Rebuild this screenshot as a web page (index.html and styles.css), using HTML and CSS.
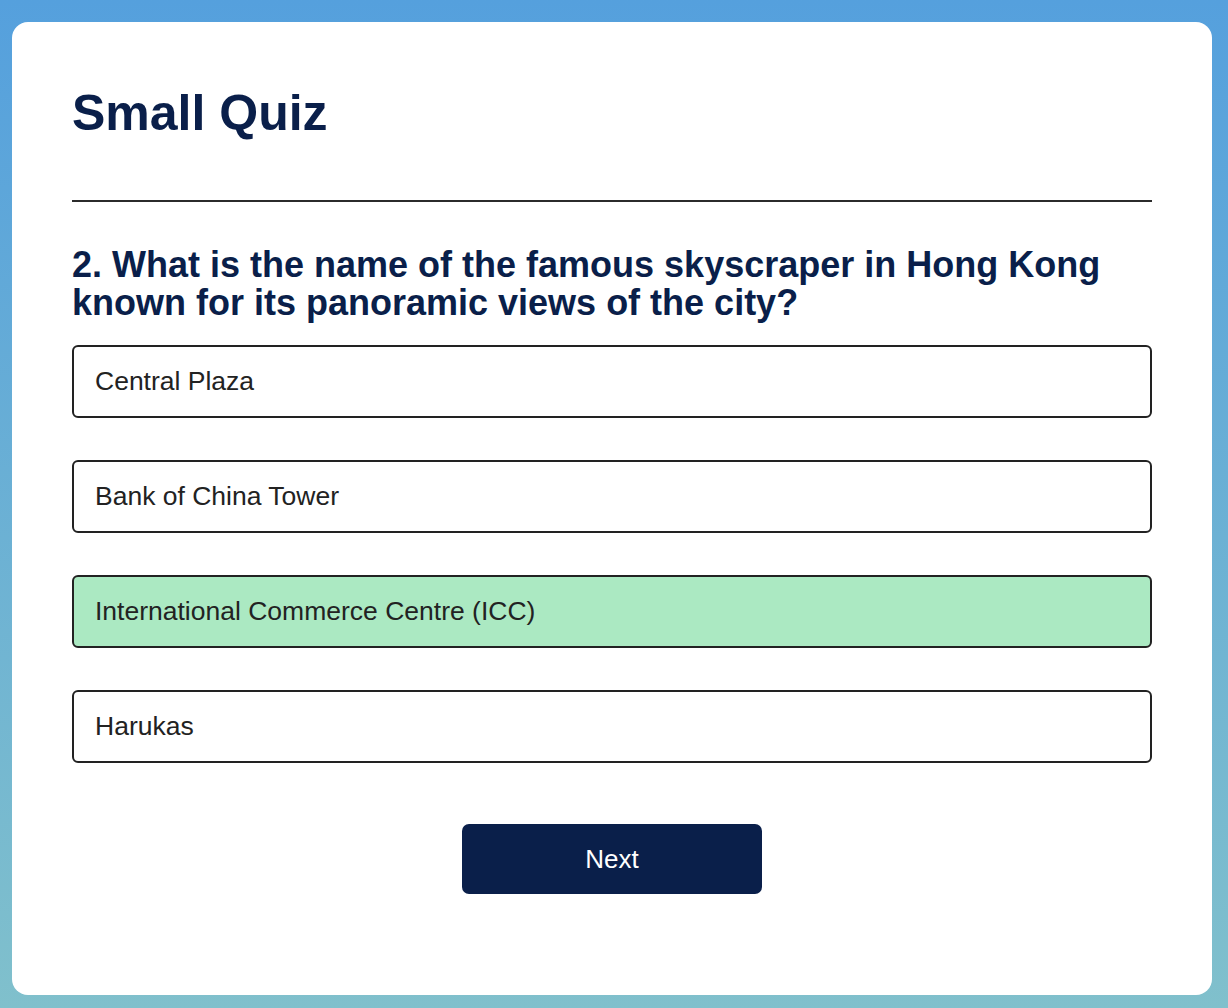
FILE: index.html
```html
<!DOCTYPE html>
<html lang="en">
<head>
<meta charset="utf-8">
<title>Small Quiz</title>
<link rel="stylesheet" href="styles.css">
</head>
<body>
  <main class="card">
    <h1 class="title">Small Quiz</h1>
    <hr class="divider">
    <h2 class="question">2. What is the name of the famous skyscraper in Hong Kong known for its panoramic views of the city?</h2>
    <div class="options">
      <div class="option">Central Plaza</div>
      <div class="option">Bank of China Tower</div>
      <div class="option option-correct">International Commerce Centre (ICC)</div>
      <div class="option">Harukas</div>
    </div>
    <div class="actions">
      <button class="next-btn" type="button">Next</button>
    </div>
  </main>
</body>
</html>
```

FILE: styles.css
```css
* { box-sizing: border-box; }

html, body { height: 100%; }

body {
  margin: 0;
  padding: 22px 16px 13px 12px;
  min-height: 100vh;
  background: linear-gradient(180deg, #55a0dd 0%, #80c0cc 100%);
  font-family: "Liberation Sans", Arial, Helvetica, sans-serif;
}

.card {
  background: #ffffff;
  border-radius: 16px;
  padding: 60px;
  min-height: 973px;
}

.title {
  margin: 0;
  font-size: 50px;
  line-height: 62px;
  font-weight: 700;
  color: #0a1f4a;
}

.divider {
  margin: 56px 0 0 0;
  border: 0;
  height: 2px;
  background: #2b2b2b;
}

.question {
  margin: 44px 0 0 0;
  font-size: 36px;
  line-height: 38px;
  font-weight: 700;
  color: #0a1f4a;
}

.options {
  margin-top: 23px;
  display: flex;
  flex-direction: column;
  gap: 42px;
}

.option {
  height: 73px;
  display: flex;
  align-items: center;
  padding: 0 21px;
  border: 2px solid #222222;
  border-radius: 6px;
  font-size: 26.5px;
  color: #222222;
  background: #ffffff;
}

.option-correct {
  background: #abe9c2;
}

.actions {
  display: flex;
  justify-content: center;
  margin-top: 61px;
}

.next-btn {
  width: 300px;
  height: 70px;
  border: 0;
  border-radius: 7px;
  background: #0a1f4a;
  color: #ffffff;
  font-family: "Liberation Sans", Arial, Helvetica, sans-serif;
  font-size: 26px;
  cursor: pointer;
}
```
